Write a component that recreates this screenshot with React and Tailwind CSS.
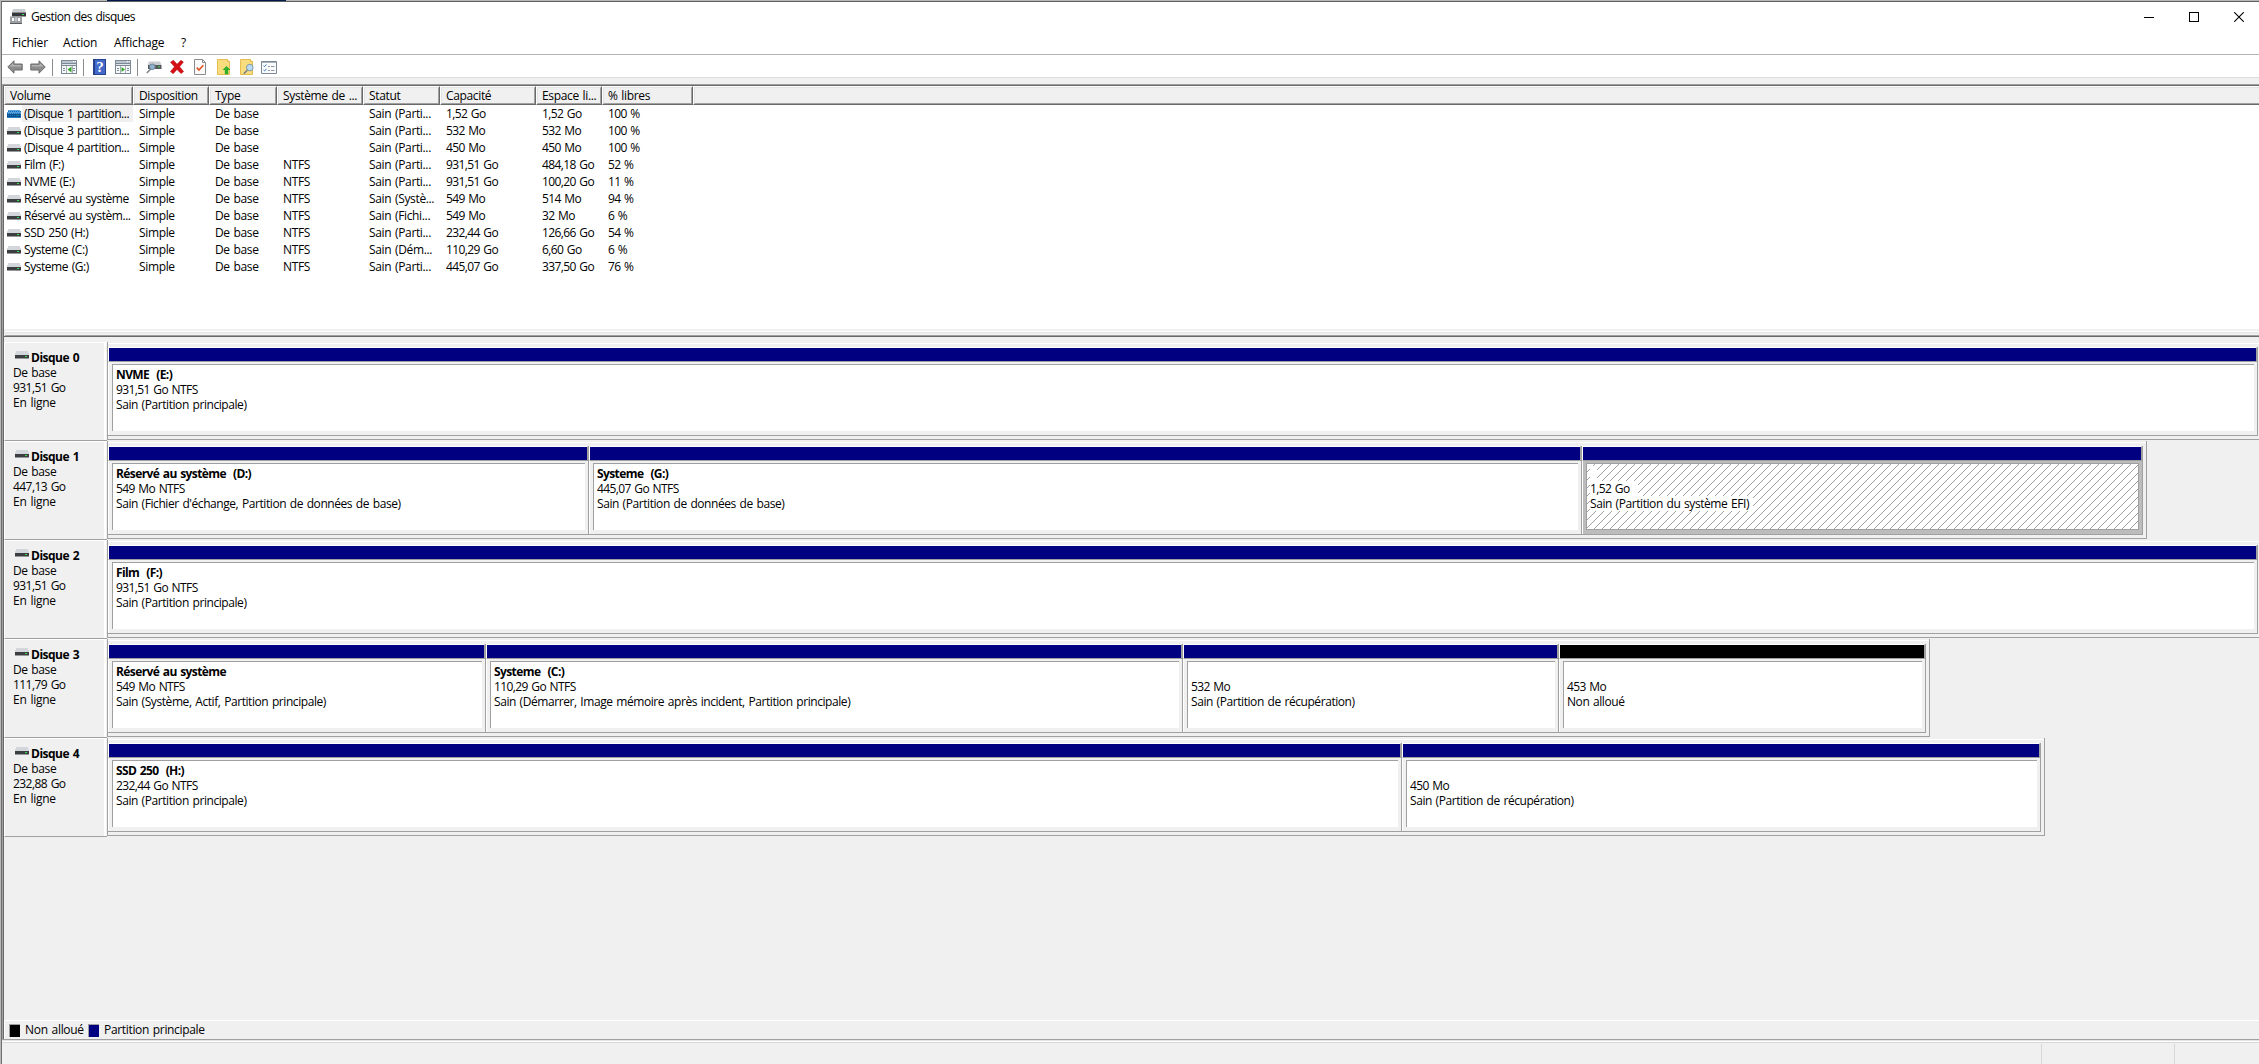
const COLUMNS = [
  { label: "Volume", className: "w-[129px]" },
  { label: "Disposition", className: "w-[76px]" },
  { label: "Type", className: "w-[68px]" },
  { label: "Système de ...", className: "w-[86px]" },
  { label: "Statut", className: "w-[77px]" },
  { label: "Capacité", className: "w-[96px]" },
  { label: "Espace li...", className: "w-[66px]" },
  { label: "% libres", className: "w-[91px]" },
];

const VOLUMES = [
  ["(Disque 1 partition...", "Simple", "De base", "", "Sain (Parti...", "1,52 Go", "1,52 Go", "100 %"],
  ["(Disque 3 partition...", "Simple", "De base", "", "Sain (Parti...", "532 Mo", "532 Mo", "100 %"],
  ["(Disque 4 partition...", "Simple", "De base", "", "Sain (Parti...", "450 Mo", "450 Mo", "100 %"],
  ["Film (F:)", "Simple", "De base", "NTFS", "Sain (Parti...", "931,51 Go", "484,18 Go", "52 %"],
  ["NVME (E:)", "Simple", "De base", "NTFS", "Sain (Parti...", "931,51 Go", "100,20 Go", "11 %"],
  ["Réservé au système", "Simple", "De base", "NTFS", "Sain (Systè...", "549 Mo", "514 Mo", "94 %"],
  ["Réservé au systèm...", "Simple", "De base", "NTFS", "Sain (Fichi...", "549 Mo", "32 Mo", "6 %"],
  ["SSD 250 (H:)", "Simple", "De base", "NTFS", "Sain (Parti...", "232,44 Go", "126,66 Go", "54 %"],
  ["Systeme (C:)", "Simple", "De base", "NTFS", "Sain (Dém...", "110,29 Go", "6,60 Go", "6 %"],
  ["Systeme (G:)", "Simple", "De base", "NTFS", "Sain (Parti...", "445,07 Go", "337,50 Go", "76 %"],
];

const DISKS = [
  {
    name: "Disque 0",
    size: "931,51 Go",
    partitions: [{ width: 2150, title: "NVME  (E:)", size: "931,51 Go NTFS", state: "Sain (Partition principale)" }],
  },
  {
    name: "Disque 1",
    size: "447,13 Go",
    partitions: [
      {
        width: 481,
        title: "Réservé au système  (D:)",
        size: "549 Mo NTFS",
        state: "Sain (Fichier d'échange, Partition de données de base)",
      },
      { width: 993, title: "Systeme  (G:)", size: "445,07 Go NTFS", state: "Sain (Partition de données de base)" },
      { width: 561, size: "1,52 Go", state: "Sain (Partition du système EFI)", selected: true },
    ],
  },
  {
    name: "Disque 2",
    size: "931,51 Go",
    partitions: [{ width: 2150, title: "Film  (F:)", size: "931,51 Go NTFS", state: "Sain (Partition principale)" }],
  },
  {
    name: "Disque 3",
    size: "111,79 Go",
    partitions: [
      {
        width: 378,
        title: "Réservé au système",
        size: "549 Mo NTFS",
        state: "Sain (Système, Actif, Partition principale)",
      },
      {
        width: 697,
        title: "Systeme  (C:)",
        size: "110,29 Go NTFS",
        state: "Sain (Démarrer, Image mémoire après incident, Partition principale)",
      },
      { width: 376, size: "532 Mo", state: "Sain (Partition de récupération)" },
      { width: 367, size: "453 Mo", state: "Non alloué", unallocated: true },
    ],
  },
  {
    name: "Disque 4",
    size: "232,88 Go",
    partitions: [
      { width: 1294, title: "SSD 250  (H:)", size: "232,44 Go NTFS", state: "Sain (Partition principale)" },
      { width: 639, size: "450 Mo", state: "Sain (Partition de récupération)" },
    ],
  },
];

function DriveIcon({ selected }) {
  return (
    <svg width="14" height="8" viewBox="0 0 14 8" shapeRendering="crispEdges" className="shrink-0">
      <path d="M1 0H13L14 4H0Z" fill={selected ? "#5a9fd6" : "#d3d6da"} />
      <rect y="4" width="14" height="3" fill={selected ? "#12508a" : "#3c3e41"} />
      <rect y="7" width="14" height="1" fill={selected ? "#2a7fc4" : "#96999c"} />
      <rect x="10" y="5" width="2" height="1" fill={selected ? "#15a06a" : "#35e04a"} />
      {selected && (
        <path d="M1 1.5H14M0 3.5H14M1 5.5H14" stroke="#0a72c9" strokeWidth="1" strokeDasharray="1 1" />
      )}
    </svg>
  );
}

function AppIcon() {
  return (
    <svg width="16" height="16" viewBox="0 0 16 16" className="shrink-0">
      <path d="M3 0H15L16 3.5H2Z" fill="#c9ccd0" />
      <rect x="2" y="3.5" width="14" height="4" fill="#35373a" />
      <rect x="12" y="5" width="2" height="1" fill="#35e04a" />
      <path d="M0 7.5H12V14H0Z" fill="#9b9ea2" />
      <path d="M0 14H12V15H0Z" fill="#5a5c5f" />
      <path d="M2 9H4V12H2ZM8 9H10V12H8Z" fill="#fff" />
      <path d="M5 8.5H7V12H5Z" fill="#c9ccd0" />
    </svg>
  );
}

function ArrowIcon({ flip }) {
  return (
    <svg width="16" height="14" viewBox="0 0 16 14" className={flip ? "-scale-x-100" : ""}>
      <path d="M.8 7 7 .8V4H15.2V10H7V13.2Z" fill="#8d8d8d" stroke="#6b6b6b" />
      <path d="M2.5 6.6 6.2 3V5H14.2V6.6Z" fill="#b3b3b3" />
    </svg>
  );
}

function PaneIcon({ right }) {
  return (
    <svg width="16" height="14" viewBox="0 0 16 14" shapeRendering="crispEdges">
      <rect width="16" height="14" fill="#7c8894" />
      <rect x="1" y="1" width="14" height="2" fill="#b9c4cf" />
      <path d="M12 1h1v1h-1zM14 1h1v1h-1z" fill="#fff" />
      <rect x="1" y="4" width="14" height="1" fill="#dfe5ea" />
      <rect x="1" y="6" width="14" height="7" fill="#f7f8f9" />
      {right ? (
        <>
          <path d="M2 8.5h2M2 10.5h2M12 8.5h2M12 10.5h2" stroke="#7c8894" />
          <path d="M5 6h1v7H5zM10 6h1v7h-1z" fill="#a8b1ba" />
          <path d="M6.5 7 10 9.5 6.5 12Z" fill="#37a52b" shapeRendering="auto" />
        </>
      ) : (
        <>
          <path d="M2 8.5h2M2 10.5h2M12 8.5h2M12 10.5h2" stroke="#7c8894" />
          <path d="M5 6h1v7H5zM11 6h1v7h-1z" fill="#a8b1ba" />
          <path d="M10.5 6.5 6.5 9.5 10.5 12.5Z" fill="#37a52b" shapeRendering="auto" />
        </>
      )}
    </svg>
  );
}

function HelpIcon() {
  return (
    <span className="flex h-4 w-[13px] items-center justify-center border border-l-2 border-[#25428f] bg-[#4268c8] font-['Liberation_Serif',serif] text-[15px] leading-none font-bold text-white">
      ?
    </span>
  );
}

function RescanIcon() {
  return (
    <svg width="16" height="14" viewBox="0 0 16 14">
      <path d="M3 1.5H14L15.5 5H1.5Z" fill="#c9ccd0" />
      <rect x="2" y="5" width="13.5" height="4" fill="#55595e" />
      <rect x="12" y="6.3" width="2" height="1" fill="#35e04a" />
      <path d="M5 8.8.8 13" stroke="#7d8790" strokeWidth="1.6" />
      <circle cx="6.3" cy="6.8" r="2.8" fill="#8fb4cf" stroke="#6f8496" />
    </svg>
  );
}

function DeleteIcon() {
  return (
    <svg width="14" height="14" viewBox="0 0 14 14">
      <path
        d="M.5 2.2 3.5 .3 7 4.2 11 .3 13.4 2 9.6 6.8 13.6 11.6 11 13.6 7 9.4 3.2 13.7 .4 11.6 4.5 6.8Z"
        fill="#d40f16"
        stroke="#b3070d"
        strokeWidth=".5"
      />
    </svg>
  );
}

function CheckDocIcon() {
  return (
    <svg width="12" height="16" viewBox="0 0 12 16">
      <path d="M.5.5H8.5L11.5 3.5V15.5H.5Z" fill="#fafafa" stroke="#8a8a8a" />
      <path d="M8.5.5V3.5H11.5" fill="none" stroke="#8a8a8a" />
      <path d="M2.8 8.6 5 11 9.3 6.2" fill="none" stroke="#e2582b" strokeWidth="1.7" />
    </svg>
  );
}

function FolderIcon({ search }) {
  return (
    <svg width="15" height="16" viewBox="0 0 15 16">
      <path d="M.5.5H10.5L12.5 2.5V15.5H.5Z" fill="#f9dc7d" stroke="#e5bd52" />
      <path d="M10.5.5V2.5H12.5" fill="#fff3c4" stroke="#e5bd52" />
      {search ? (
        <>
          <path d="M7.5 11 3.8 14.8" stroke="#78828c" strokeWidth="1.6" />
          <circle cx="9.8" cy="8.6" r="3.3" fill="#b9dcf2" stroke="#7f97a8" />
        </>
      ) : (
        <path d="M9.5 7 13.4 11H11.2V15.2H7.8V11H5.6Z" fill="#2fae2a" />
      )}
    </svg>
  );
}

function ListIcon() {
  return (
    <svg width="16" height="13" viewBox="0 0 16 13">
      <path d="M.5.5H15.5V12.5H.5Z" fill="#fafbfc" stroke="#7c8894" />
      <path d="M1 1.5H15" stroke="#a9b3bd" />
      <path d="M2.5 4.6 3.6 5.6 5.4 3.4M2.5 9 3.6 10 5.4 7.8" fill="none" stroke="#3b7fc4" />
      <path d="M7 5.5H9M10 5.5H13.5M7 9.5H9M10 9.5H13.5" stroke="#8e99a4" />
    </svg>
  );
}

function Separator({ className }) {
  return <div className={`h-[17px] w-px bg-[#8c8c8c] ${className}`} />;
}

function TitleBar() {
  return (
    <div className="flex h-[30px] items-center pl-2">
      <AppIcon />
      <span className="ml-[5px] text-[12px] tracking-[-0.55px]">Gestion des disques</span>
      <div className="mr-[15px] ml-auto flex items-center gap-[35px] pb-px">
        <svg width="10" height="10" shapeRendering="crispEdges">
          <rect y="5" width="10" height="1" />
        </svg>
        <svg width="10" height="10" shapeRendering="crispEdges">
          <path d="M.5.5H9.5V9.5H.5Z" fill="none" stroke="#000" />
        </svg>
        <svg width="10" height="10">
          <path d="M.2.2 9.8 9.8M9.8.2.2 9.8" stroke="#000" strokeWidth="1.1" />
        </svg>
      </div>
    </div>
  );
}

function MenuBar() {
  return (
    <div className="flex h-[22px] items-center pl-[10px] tracking-[-0.15px]">
      <span className="w-[51px]">Fichier</span>
      <span className="w-[51px]">Action</span>
      <span className="w-[67px]">Affichage</span>
      <span>?</span>
    </div>
  );
}

function Toolbar() {
  return (
    <div className="flex h-6 items-center border-t border-b border-t-[#b4b4b4] border-b-[#dcdcdc] bg-white pt-[2px] pl-[5px]">
      <ArrowIcon />
      <div className="ml-[7px]">
        <ArrowIcon flip />
      </div>
      <Separator className="mr-2 ml-[6px]" />
      <PaneIcon />
      <Separator className="mr-[9px] ml-[6px]" />
      <HelpIcon />
      <div className="ml-[9px]">
        <PaneIcon right />
      </div>
      <Separator className="mr-2 ml-[6px]" />
      <RescanIcon />
      <div className="ml-2">
        <DeleteIcon />
      </div>
      <div className="ml-[10px]">
        <CheckDocIcon />
      </div>
      <div className="ml-[11px]">
        <FolderIcon />
      </div>
      <div className="ml-2">
        <FolderIcon search />
      </div>
      <div className="ml-[6px]">
        <ListIcon />
      </div>
    </div>
  );
}

const headCell =
  "border-t border-l border-t-white border-l-white border-r border-b border-r-[#696969] border-b-[#696969] bg-[#f0f0f0]";
const headInner =
  "h-full border-t border-l border-t-[#e3e3e3] border-l-[#e3e3e3] border-r border-b border-r-[#a0a0a0] border-b-[#a0a0a0]";

function VolumeList() {
  return (
    <div className="h-[243px] bg-white">
      <div className="flex h-[19px]">
        {COLUMNS.map((c) => (
          <div key={c.label} className={`${headCell} ${c.className}`}>
            <div className={`${headInner} pl-1 leading-[15px] tracking-[-0.35px] whitespace-nowrap`}>{c.label}</div>
          </div>
        ))}
        <div className={`${headCell} grow border-r-0`}>
          <div className={`${headInner} border-r-0`} />
        </div>
      </div>
      {VOLUMES.map((row, r) => (
        <div key={row[0]} className="flex h-[17px] leading-[17px]">
          {row.map((cell, i) =>
            i === 0 ? (
              <div key={i} className="flex w-[129px] items-center pl-[3px]">
                <DriveIcon selected={r === 0} />
                <span
                  className={`ml-px h-[17px] grow pl-[2px] tracking-[-0.45px] whitespace-nowrap ${r === 0 ? "bg-[#f0f0f0]" : ""}`}
                >
                  {cell}
                </span>
              </div>
            ) : (
              <div
                key={i}
                className={`${COLUMNS[i].className} pl-[6px] whitespace-nowrap ${i > 4 ? "tracking-[-0.6px]" : "tracking-[-0.35px]"}`}
              >
                {cell}
              </div>
            )
          )}
        </div>
      ))}
    </div>
  );
}

function Splitter() {
  return (
    <div className="h-2 border-t-2 border-b border-t-[#f0f0f0] border-b-[#696969]">
      <div className="ml-px h-[5px] border-t border-b border-t-white border-b-[#a0a0a0]">
        <div className="h-[3px] border-t border-[#e3e3e3]" />
      </div>
    </div>
  );
}

function Hatch() {
  return (
    <svg className="absolute inset-0 h-full w-full" shapeRendering="crispEdges">
      <defs>
        <pattern id="hatch" width="8" height="8" patternUnits="userSpaceOnUse">
          {[0, 1, 2, 3, 4, 5, 6, 7].map((n) => (
            <rect key={n} x={n} y={7 - n} width="1" height="1" fill="#a0a0a0" />
          ))}
        </pattern>
      </defs>
      <rect width="100%" height="100%" fill="url(#hatch)" />
    </svg>
  );
}

function Partition({ part }) {
  const { selected, unallocated } = part;
  return (
    <div className="flex h-[89px] shrink-0 flex-col border-r border-b border-[#a0a0a0]" style={{ width: part.width }}>
      <div
        className={`h-[15px] border-t border-l border-t-white border-l-white border-r border-b border-r-[#a0a0a0] border-b-[#a0a0a0] ${unallocated ? "bg-black" : "bg-[#000080]"}`}
      />
      <div className={`grow border-l border-white pt-[2px] pr-[3px] pb-1 pl-[3px] ${selected ? "bg-[#bcbcbc]" : ""}`}>
        <div
          className={`relative h-[67px] border-t border-l bg-white pt-[2px] pl-[3px] leading-[15px] whitespace-pre ${selected ? "border-r border-b border-[#a0a0a0]" : "border-[#a0a0a0]"}`}
        >
          {selected && <Hatch />}
          <div className="relative flex flex-col items-start">
            <div className={`h-[15px] font-bold tracking-[-0.6px] ${selected ? "w-[7px] bg-white" : ""}`}>
              {part.title}
            </div>
            <div className={`tracking-[-0.6px] ${selected ? "bg-white pr-2" : ""}`}>{part.size}</div>
            <div className={`tracking-[-0.43px] ${selected ? "bg-white pr-1" : ""}`}>{part.state}</div>
          </div>
        </div>
      </div>
    </div>
  );
}

function DiskRow({ disk }) {
  return (
    <div className="flex h-[99px]">
      <div className="h-[99px] w-[103px] shrink-0 border-t border-b border-l border-t-white border-b-[#a0a0a0] border-l-white">
        <div className="h-full w-[101px] border-r-2 border-white pt-[7px] pl-2 leading-[15px]">
          <div className="flex pl-[2px]">
            <div className="pt-px">
              <DriveIcon />
            </div>
            <span className="ml-[2px] font-bold tracking-[-0.5px]">{disk.name}</span>
          </div>
          <div className="tracking-[-0.4px]">De base</div>
          <div className="tracking-[-0.55px]">{disk.size}</div>
          <div className="tracking-[-0.25px]">En ligne</div>
        </div>
      </div>
      <div className="h-[98px] border-r border-b border-l border-[#a0a0a0]">
        <div className="mt-px flex h-24 border-t border-white pt-[3px] pr-[3px]">
          {disk.partitions.map((p) => (
            <Partition key={p.state} part={p} />
          ))}
        </div>
      </div>
    </div>
  );
}

function Legend() {
  return (
    <div className="flex h-[19px] items-center border-t border-l border-white pl-1">
      <span className="h-[13px] w-[11px] border-t border-l border-[#a0a0a0] bg-black" />
      <span className="ml-[5px] w-[63px] tracking-[-0.3px]">Non alloué</span>
      <span className="h-[13px] w-[11px] border-t border-l border-[#a0a0a0] bg-[#000080]" />
      <span className="ml-[5px] tracking-[-0.33px]">Partition principale</span>
    </div>
  );
}

export default function App() {
  return (
    <div className="h-[1064px] w-[2259px] overflow-hidden bg-[#b8b8b8] pl-px font-['Open_Sans','Noto_Sans',sans-serif] text-[12px] [word-spacing:1px] text-black">
      <div className="h-px pl-[106px]">
        <div className="h-px w-[179px] bg-[#001a4d]" />
      </div>
      <div className="flex h-[1063px] flex-col border-t border-l border-t-[#5f5f5f] border-l-[#707070] bg-[#f0f0f0]">
        <div className="bg-white">
          <TitleBar />
          <MenuBar />
        </div>
        <Toolbar />
        <div className="mt-[6px] border-t border-b border-l border-[#a0a0a0]">
          <div className="flex h-[954px] flex-col border-t border-l border-[#696969]">
            <VolumeList />
            <Splitter />
            <div className="grow overflow-hidden pt-[5px]">
              {DISKS.map((d) => (
                <DiskRow key={d.name} disk={d} />
              ))}
            </div>
            <Legend />
          </div>
        </div>
        <div className="h-[3px] border-t border-b border-t-[#e3e3e3] border-b-[#d7d7d7] bg-white" />
        <div className="flex grow justify-end pt-px">
          <div className="w-[133px] border-l border-[#d7d7d7]" />
          <div className="w-[85px] border-l border-[#d7d7d7]" />
        </div>
      </div>
    </div>
  );
}
